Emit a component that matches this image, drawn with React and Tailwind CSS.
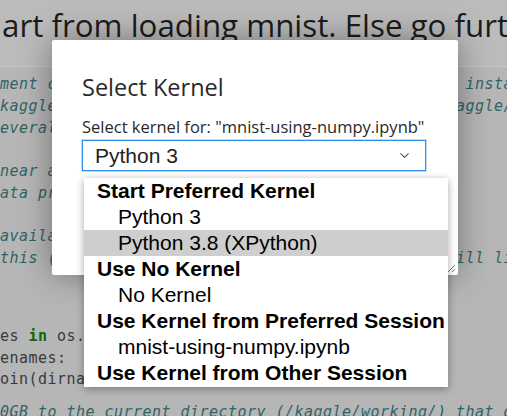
import { ChevronDown } from "lucide-react";

const c = (text) => ({ text, cls: "italic text-[#2f6464]" });
const t = (text) => ({ text, cls: "text-[#3a3a3a]" });
const k = (text) => ({ text, cls: "font-bold text-[#0b660b]" });
const s = (text) => ({ text, cls: "text-[#7a2a2a]" });

const topLines = [
  [c("# This Python 3 environment comes with many helpful analytics libraries installed")],
  [c("# It is defined by the kaggle/python Docker image: https://github.com/kaggle/docker-python")],
  [c("# For example, here's several helpful packages to load")],
  [],
  [k("import"), t(" numpy "), k("as"), t(" np "), c("# linear algebra")],
  [k("import"), t(" pandas "), k("as"), t(" pd "), c("# data processing, CSV file I/O (e.g. pd.read_csv)")],
  [],
  [c('# Input data files are available in the read-only "../input/" directory')],
  [c("# For example, running this (by clicking run or pressing Shift+Enter) will list all files under the input directory")],
];

const loopLines = [
  [k("for"), t(" dirname, _, filenames "), k("in"), t(" os.walk("), s("'/kaggle/input'"), t("):")],
  [t("    "), k("for"), t(" filename "), k("in"), t(" filenames:")],
  [t("        "), k("print"), t("(os.path.join(dirname, filename))")],
];

const lastLines = [
  [c('# You can write up to 20GB to the current directory (/kaggle/working/) that gets preserved as output when you create a version using "Save & Run All"')],
];

const CodeLine = ({ parts }) => (
  <div className="h-[21.75px] leading-[21.75px] whitespace-pre">
    {parts.length ? parts.map((p, i) => <span key={i} className={p.cls}>{p.text}</span>) : " "}
  </div>
);

const options = [
  { label: "Start Preferred Kernel", header: true },
  { label: "Python 3" },
  { label: "Python 3.8 (XPython)", active: true },
  { label: "Use No Kernel", header: true },
  { label: "No Kernel" },
  { label: "Use Kernel from Preferred Session", header: true },
  { label: "mnist-using-numpy.ipynb" },
  { label: "Use Kernel from Other Session", header: true },
];

const App = () => {
  return (
    <div className="relative h-[416px] w-[507px] overflow-hidden bg-[#bbbbbb]">
      {/* notebook behind the modal */}
      <div className="h-[66px] overflow-hidden whitespace-nowrap pl-[2px] pt-[5px] text-[31.3px] leading-[40px] text-[#1c1c1c] [font-family:'Open_Sans',sans-serif]">
        art from loading mnist. Else go further
      </div>
      <div className="h-[350px] overflow-hidden border-t border-[#c8c8c8] bg-[#b6b6b6] pt-[7px] text-[15px] tracking-[0.47px] [font-family:'DejaVu_Sans_Mono',monospace]">
        <div className="ml-[-218.5px]">
          {topLines.map((l, i) => <CodeLine key={i} parts={l} />)}
          <div className="h-[56px]" />
          {loopLines.map((l, i) => <CodeLine key={i} parts={l} />)}
          <div className="h-[11px]" />
          {lastLines.map((l, i) => <CodeLine key={i} parts={l} />)}
        </div>
      </div>

      {/* modal */}
      <div className="absolute left-[52px] top-[40px] h-[235px] w-[406px] rounded-[2px] bg-white pl-[30px] pr-[31px] shadow-[0_0_32px_rgba(0,0,0,0.38)] [font-family:'Open_Sans',sans-serif]">
        <div className="pt-[32px] text-[23.5px] leading-[30px] text-[#2a2a2a]">Select Kernel</div>
        <div className="mt-[14px] text-[16.5px] leading-[22px] text-[#2a2a2a]">Select kernel for: "mnist-using-numpy.ipynb"</div>
        <div className="mt-[2px] flex h-[31px] w-[344px] items-center justify-between border border-[#2f8fe8] pl-[12px] pr-[13px] shadow-[0_0_0_1px_rgba(60,150,235,0.35)] [font-family:'Liberation_Sans',sans-serif]">
          <span className="text-[21px] text-[#222]">Python 3</span>
          <ChevronDown size={15} strokeWidth={1.75} className="text-[#555]" />
        </div>
        <svg className="absolute bottom-[2px] right-[2px]" width="10" height="10" viewBox="0 0 10 10">
          <path d="M9 2 L2 9 M9 6 L6 9" stroke="#777" strokeWidth="1" />
        </svg>
      </div>

      {/* open select list */}
      <div className="absolute left-[84px] top-[178px] w-[364px] bg-white pb-[1px] shadow-[0_2px_8px_rgba(0,0,0,0.35)] [font-family:'Liberation_Sans',sans-serif]">
        {options.map((o) => (
          <div
            key={o.label}
            className={`h-[26px] whitespace-nowrap text-[21px] leading-[26px] text-black ${o.header ? "pl-[13px] font-bold" : "pl-[34px]"} ${o.active ? "bg-[#cecece]" : ""}`}
          >
            {o.label}
          </div>
        ))}
      </div>
    </div>
  );
};

export default App;
